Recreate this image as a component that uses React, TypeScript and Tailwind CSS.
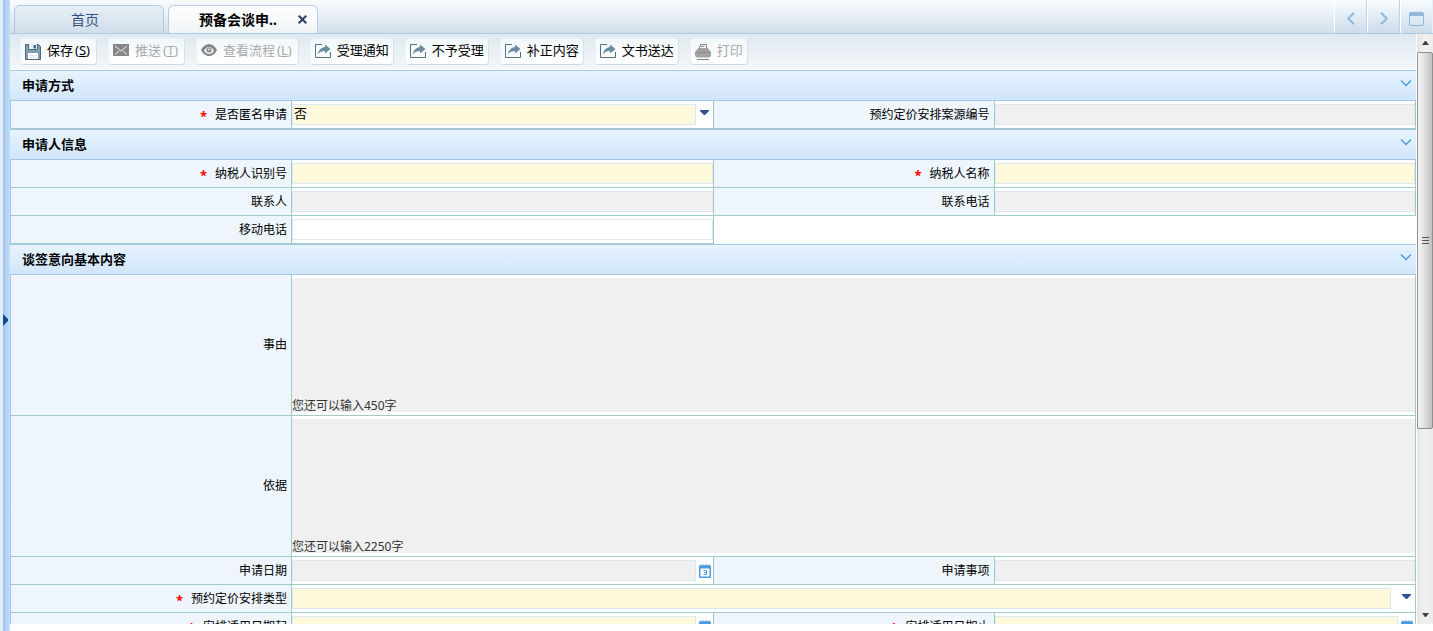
import React, { useRef } from 'react';

const SaveIcon = () => (
  <svg className="w-4 h-4" viewBox="0 0 16 16" fill="none">
    <path d="M0.500 0.500h13l2 2v13h-15z" fill="#7f9db3" stroke="#4c6a7c" />
    <path d="M3 0h10v6H3z" fill="#eaf2f8" />
    <path d="M3.500 0v5.500h9V0" stroke="#4c6a7c" />
    <path d="M8.500 1h2.500v3.500H8.500z" fill="#4c6a7c" />
    <path d="M3 9h10v6H3z" fill="#ffffff" />
    <path d="M4 11.500h8M4 13.500h8" stroke="#dde5ea" />
  </svg>
);

const MailIcon = () => (
  <svg className="w-4 h-4" viewBox="0 0 16 16" fill="none">
    <rect x="0" y="0" width="16" height="12" fill="#858585" />
    <path d="M2 2l6 5 6-5M2 10.500L6 7M14 10.500L10 7" stroke="#f0f0f0" />
  </svg>
);

const EyeIcon = () => (
  <svg className="w-4 h-4" viewBox="0 0 16 16" fill="none">
    <path d="M0 6C2 2 5 0 8 0s6 2 8 6c-2 4-5 6-8 6S2 10 0 6z" fill="#858585" />
    <path d="M3 7c1-2.500 3-4 5-4s4 1.500 5 4c-1.500 2-3 3-5 3S4.500 9 3 7z" fill="#f2f2f2" />
    <circle cx="8" cy="6" r="2.500" fill="#858585" />
    <circle cx="8" cy="5.500" r="1" fill="#f2f2f2" />
  </svg>
);

const ShareIcon = () => (
  <svg className="w-4 h-4" viewBox="0 0 16 16" fill="none">
    <path d="M7 0.500H0.500v13h15V8" stroke="#54717f" />
    <path d="M2.500 10.500C4 5.500 6.500 3.500 10 3V0.500l5.500 4.500L10 9.500V7C7 7 4.500 8 2.500 10.500z" fill="#6b8ba1" />
  </svg>
);

const PrintIcon = () => (
  <svg className="w-4 h-4" viewBox="0 0 16 16" fill="none">
    <path d="M4.500 5V2.500h1v-2h6v4.500M5.500 2.500h4" stroke="#858585" />
    <path d="M3 4.500h10l3 3.500v4l-2 1.500H2L0 12V8z" fill="#a3a3a3" />
    <path d="M3 5h10M0 8.500h16" stroke="#8d8d8d" />
    <path d="M2 15.500h12" stroke="#858585" />
  </svg>
);

const ArrowDown = () => (
  <svg className="w-[9px] h-[5px]" viewBox="0 0 9 5">
    <path d="M0 0h9v1L5 5H4L0 1z" fill="#2f5090" />
  </svg>
);

const CalendarIcon = () => (
  <svg className="w-3 h-[14px]" viewBox="0 0 12 14" fill="none">
    <rect x="0" y="1" width="12" height="13" rx="1.500" fill="#4a9ae0" />
    <path d="M2 0v2M4.500 0v2M7.500 0v2M10 0v2" stroke="#8cc0ee" />
    <rect x="1.500" y="4.500" width="9" height="8" fill="#ffffff" />
    <path d="M4.500 6.500h3v4h-3M5 8.500h2.500" stroke="#4a9ae0" />
  </svg>
);

const toolbar = [
  { text: '保存', hotkey: 'S', icon: SaveIcon },
  { text: '推送', hotkey: 'T', icon: MailIcon, disabled: true },
  { text: '查看流程', hotkey: 'L', icon: EyeIcon, disabled: true },
  { text: '受理通知', icon: ShareIcon },
  { text: '不予受理', icon: ShareIcon },
  { text: '补正内容', icon: ShareIcon },
  { text: '文书送达', icon: ShareIcon },
  { text: '打印', icon: PrintIcon, disabled: true },
];

const Section = ({ title, children }: { title: string; children: React.ReactNode }) => (
  <section>
    <div className="flex items-center justify-between h-[31px] pl-3 pr-1 border-y border-[#a3c7e4] bg-gradient-to-b from-[#e7f3fe] to-[#d1e6fb]">
      <h2 className="pb-[2px] text-[13px] leading-4 font-bold text-black">{title}</h2>
      <button type="button" aria-label={`收起${title}`} className="pb-1">
        <svg className="w-3 h-[7px]" viewBox="0 0 12 7" fill="none">
          <path d="M1 0.500l5 5 5-5" stroke="#4a9de2" strokeWidth="1.500" />
        </svg>
      </button>
    </div>
    <div className="grid grid-cols-[2fr_3fr_2fr_3fr] border-l border-[#a3c7e4]">{children}</div>
  </section>
);

type FieldProps = {
  id: string;
  label: string;
  kind?: 'text' | 'select' | 'date' | 'area';
  value?: string;
  hint?: string;
  required?: boolean;
  readOnly?: boolean;
  wide?: boolean;
};

const Field = ({ id, label, kind = 'text', value = '', hint, required, readOnly, wide }: FieldProps) => {
  const bg = required ? 'bg-[#fff9db]' : readOnly ? 'bg-[#f0f0f0]' : 'bg-white';
  const control = `flex-1 min-w-0 h-[21px] pl-px pb-[3px] border border-[#dbe8f1] outline-none text-[13px] leading-4 text-black ${bg}`;

  return (
    <>
      <div className="flex items-center justify-end pr-1 bg-[#eef5fc] border-r border-b border-[#a3cbc6]">
        {required && <span className="pt-[2px] mr-2 font-bold text-[13px] leading-4 text-[#ff0000]">*</span>}
        <label htmlFor={id} className="text-xs leading-4 text-black">{label}</label>
      </div>
      <div className={`py-[3px] bg-white border-r border-b border-[#a3cbc6] ${wide ? 'col-span-3' : ''}`}>
        {kind === 'area' ? (
          <div className="flex flex-col h-[134px] bg-[#f0f0f0]">
            <textarea id={id} readOnly className="flex-1 w-full resize-none outline-none bg-transparent text-xs" />
            <p className="text-xs leading-3 text-[#333]">{hint}</p>
          </div>
        ) : (
          <div className="flex items-center">
            {kind === 'select' ? (
              <select id={id} defaultValue={value} className={`appearance-none ${control}`}>
                {value ? <option>{value}</option> : <option value=""></option>}
                {value && <option>是</option>}
              </select>
            ) : (
              <input id={id} type="text" defaultValue={value} readOnly={readOnly} className={control} />
            )}
            {kind === 'select' && (
              <span className={`flex justify-end pr-1 pb-1 ${wide ? 'w-6' : 'w-[17px]'}`}>
                <ArrowDown />
              </span>
            )}
            {kind === 'date' && (
              <button type="button" aria-label={`选择${label}`} className="flex justify-end w-[17px] pr-[2px]">
                <CalendarIcon />
              </button>
            )}
          </div>
        )}
      </div>
    </>
  );
};

export default function App() {
  const pane = useRef<HTMLDivElement>(null);
  const scroll = (top: number) => pane.current?.scrollBy({ top });

  return (
    <div className="flex h-screen overflow-hidden bg-white font-['Noto_Sans','Noto_Sans_CJK_SC',sans-serif]">
      {/* Side panel splitter */}
      <aside className="flex w-[10px] shrink-0 items-center border-l-3 border-[#e0edf9] bg-gradient-to-r from-[#a3c4eb] to-[#c2e0fa] pt-2">
        <button type="button" aria-label="展开菜单">
          <svg className="w-[6px] h-3" viewBox="0 0 6 12">
            <path d="M0 0l5 5v2l-5 5z" fill="#124a8c" />
          </svg>
        </button>
      </aside>

      <div className="flex flex-col flex-1 min-w-0 pb-[7px]">
        {/* Tabs */}
        <header className="flex h-[34px] shrink-0 justify-between border-b border-[#a9c9e6] bg-gradient-to-b from-[#f8fcff] via-[#e8eff5] to-[#d0deea]">
          <nav className="flex items-end gap-1 pl-1">
            <button type="button" className="w-[150px] h-7 pr-2 rounded-t-md border border-b-0 border-[#b3c9dd] bg-gradient-to-b from-[#e7eff5] to-[#d0deea] text-sm leading-5 text-[#33517e]">
              首页
            </button>
            <div className="flex w-[150px] h-7 items-center justify-between pl-[30px] pr-[10px] rounded-t-md border border-b-0 border-[#b3cfe8] bg-gradient-to-b from-white to-[#f1f5f8]">
              <button type="button" className="text-sm leading-5 font-bold text-black">预备会谈申..</button>
              <button type="button" aria-label="关闭">
                <svg className="w-[9px] h-[9px]" viewBox="0 0 9 9" fill="none">
                  <path d="M0.700 0.700l7.600 7.600M8.300 0.700L0.700 8.300" stroke="#2c3f60" strokeWidth="2" />
                </svg>
              </button>
            </div>
          </nav>
          <div className="flex">
            <button type="button" aria-label="向左" className="flex w-[33px] items-center justify-center pt-1 border-l border-white border-r border-r-[#c3d3e2] bg-gradient-to-b from-[#f8fcff] to-[#ccdcea]">
              <svg className="w-2 h-[13px]" viewBox="0 0 8 13" fill="none">
                <path d="M7 0.700L1.200 6.500 7 12.300" stroke="#92b9dc" strokeWidth="2" />
              </svg>
            </button>
            <button type="button" aria-label="向右" className="flex w-[33px] items-center justify-center pt-1 border-l border-white border-r border-r-[#c3d3e2] bg-gradient-to-b from-[#f8fcff] to-[#ccdcea]">
              <svg className="w-2 h-[13px]" viewBox="0 0 8 13" fill="none">
                <path d="M1 0.700l5.800 5.800L1 12.300" stroke="#92b9dc" strokeWidth="2" />
              </svg>
            </button>
            <button type="button" aria-label="最大化" className="flex w-[33px] items-center justify-center pt-1 border-l border-white border-r border-r-[#e8f0f7] bg-gradient-to-b from-[#f8fcff] to-[#ccdcea]">
              <svg className="w-[15px] h-[14px]" viewBox="0 0 15 14" fill="none">
                <rect x="0.500" y="0.500" width="14" height="13" rx="1.500" stroke="#92b9dc" />
                <path d="M1 1h13v3H1z" fill="#92b9dc" />
              </svg>
            </button>
          </div>
        </header>

        <div className="flex flex-1 min-h-0">
          <div ref={pane} className="flex-1 min-w-0 overflow-y-auto [scrollbar-width:none]">
            {/* Toolbar */}
            <div className="flex h-9 items-start gap-[11px] pl-[10px] pt-1 border-b border-white bg-gradient-to-b from-[#dfe9f1] to-[#f4f7fa]">
              {toolbar.map(({ text, hotkey, icon: Icon, disabled }) => (
                <button
                  key={text}
                  type="button"
                  disabled={disabled}
                  className={`flex h-[27px] items-center gap-[6px] px-1 rounded-sm border border-[#eef3f7] border-r-[#dcdfe3] border-b-[#d5d8dc] bg-gradient-to-b from-[#f1f7fb] to-white text-[13px] leading-4 ${disabled ? 'text-[#a9a9a9]' : 'text-black'}`}
                >
                  <Icon />
                  <span className="pb-[3px]">
                    {text}
                    {hotkey && <span className="px-[2px]">(<u>{hotkey}</u>)</span>}
                  </span>
                </button>
              ))}
            </div>

            <form>
              <Section title="申请方式">
                <Field id="anonymous" label="是否匿名申请" kind="select" value="否" required />
                <Field id="caseNo" label="预约定价安排案源编号" readOnly />
              </Section>

              <Section title="申请人信息">
                <Field id="taxpayerId" label="纳税人识别号" required />
                <Field id="taxpayerName" label="纳税人名称" required />
                <Field id="contact" label="联系人" readOnly />
                <Field id="phone" label="联系电话" readOnly />
                <Field id="mobile" label="移动电话" />
              </Section>

              <Section title="谈签意向基本内容">
                <Field id="reason" label="事由" kind="area" hint="您还可以输入450字" wide />
                <Field id="basis" label="依据" kind="area" hint="您还可以输入2250字" wide />
                <Field id="applyDate" label="申请日期" kind="date" readOnly />
                <Field id="applyItem" label="申请事项" readOnly />
                <Field id="arrangeType" label="预约定价安排类型" kind="select" required wide />
                <Field id="dateFrom" label="安排适用日期起" kind="date" required />
                <Field id="dateTo" label="安排适用日期止" kind="date" required />
              </Section>
            </form>
          </div>

          {/* Scrollbar */}
          <div className="flex flex-col w-[17px] shrink-0 border-l border-white bg-gradient-to-r from-[#e6e6e6] via-[#f1f1f1] to-[#ececec]">
            <button type="button" aria-label="向上滚动" onClick={() => scroll(-60)} className="flex h-[18px] items-center justify-center">
              <svg className="w-[7px] h-1" viewBox="0 0 7 4">
                <path d="M3 0h1l3 4H0z" fill="#404040" />
              </svg>
            </button>
            <div className="flex-1 min-h-0">
              <div className="flex h-[68%] flex-col items-center justify-center gap-[2px] rounded-xs border border-[#8f8f8f] bg-gradient-to-r from-[#f5f5f5] via-[#dedee0] to-[#bfc0c4]">
                <span className="w-[7px] h-px bg-[#555]" />
                <span className="w-[7px] h-px bg-[#555]" />
                <span className="w-[7px] h-px bg-[#555]" />
              </div>
            </div>
            <button type="button" aria-label="向下滚动" onClick={() => scroll(60)} className="flex h-[18px] items-center justify-center">
              <svg className="w-[7px] h-1" viewBox="0 0 7 4">
                <path d="M0 0h7L4 4H3z" fill="#404040" />
              </svg>
            </button>
          </div>
        </div>
      </div>
    </div>
  );
}
